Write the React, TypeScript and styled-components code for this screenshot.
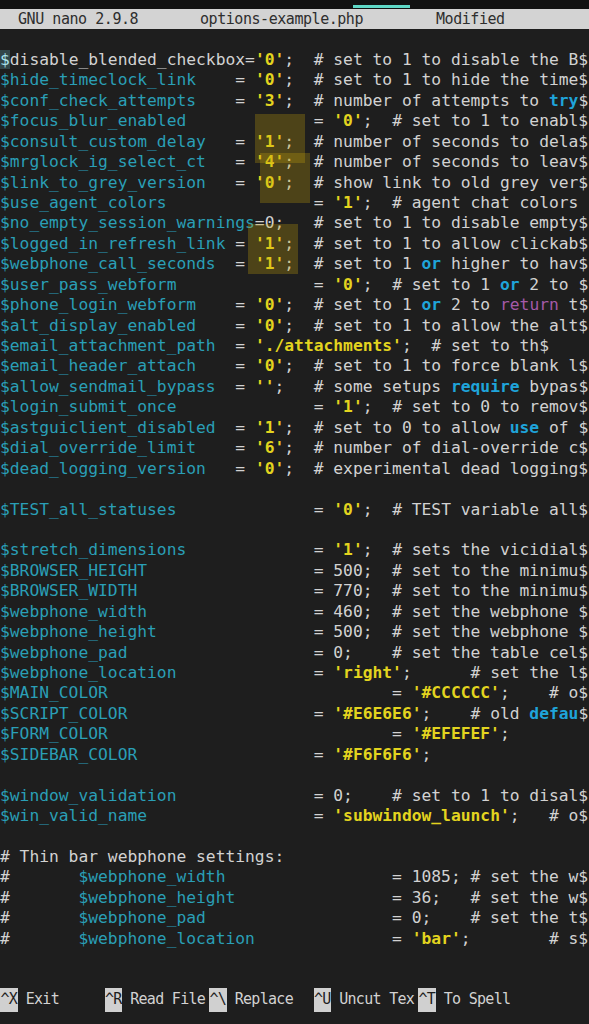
import * as React from 'react';
import styled, { createGlobalStyle } from 'styled-components';

type Kind = 'text' | 'variable' | 'string' | 'keyword' | 'control';

interface Token {
	kind: Kind;
	text: string;
}

var PATTERN = /(\$\w+)|('[^']*')|\b(try|or|require|use|defau)\b|\b(return)\b/g;

function tokenize(line: string): Token[] {
	var tokens: Token[] = [];
	var last = 0;
	for (var m of line.matchAll(PATTERN)) {
		var at = m.index ?? 0;
		if (at > last) tokens.push({ kind: 'text', text: line.slice(last, at) });
		var kind: Kind = m[1] ? 'variable' : m[2] ? 'string' : m[3] ? 'keyword' : 'control';
		tokens.push({ kind, text: m[0] });
		last = at + m[0].length;
	}
	if (last < line.length) tokens.push({ kind: 'text', text: line.slice(last) });
	return tokens;
}

// name padded to the "=" column, then value, then the comment at its column
function setting(name: string, eqCol: number, value: string, commentCol = 0, comment = '') {
	var left = name.padEnd(eqCol) + '= ' + value;
	return comment ? left.padEnd(commentCol) + comment : left;
}

var LINES: string[] = [
	"$disable_blended_checkbox='0';  # set to 1 to disable the B$",
	setting('$hide_timeclock_link', 24, "'0';", 32, '# set to 1 to hide the time$'),
	setting('$conf_check_attempts', 24, "'3';", 32, '# number of attempts to try$'),
	setting('$focus_blur_enabled', 32, "'0';", 40, '# set to 1 to enabl$'),
	setting('$consult_custom_delay', 24, "'1';", 32, '# number of seconds to dela$'),
	setting('$mrglock_ig_select_ct', 24, "'4';", 32, '# number of seconds to leav$'),
	setting('$link_to_grey_version', 24, "'0';", 32, '# show link to old grey ver$'),
	setting('$use_agent_colors', 32, "'1';", 40, '# agent chat colors'),
	'$no_empty_session_warnings=0;   # set to 1 to disable empty$',
	setting('$logged_in_refresh_link', 24, "'1';", 32, '# set to 1 to allow clickab$'),
	setting('$webphone_call_seconds', 24, "'1';", 32, '# set to 1 or higher to hav$'),
	setting('$user_pass_webform', 32, "'0';", 40, '# set to 1 or 2 to $'),
	setting('$phone_login_webform', 24, "'0';", 32, '# set to 1 or 2 to return t$'),
	setting('$alt_display_enabled', 24, "'0';", 32, '# set to 1 to allow the alt$'),
	setting('$email_attachment_path', 24, "'./attachments';", 44, '# set to th$'),
	setting('$email_header_attach', 24, "'0';", 32, '# set to 1 to force blank l$'),
	setting('$allow_sendmail_bypass', 24, "'';", 32, '# some setups require bypas$'),
	setting('$login_submit_once', 32, "'1';", 40, '# set to 0 to remov$'),
	setting('$astguiclient_disabled', 24, "'1';", 32, '# set to 0 to allow use of $'),
	setting('$dial_override_limit', 24, "'6';", 32, '# number of dial-override c$'),
	setting('$dead_logging_version', 24, "'0';", 32, '# experimental dead logging$'),
	'',
	setting('$TEST_all_statuses', 32, "'0';", 40, '# TEST variable all$'),
	'',
	setting('$stretch_dimensions', 32, "'1';", 40, '# sets the vicidial$'),
	setting('$BROWSER_HEIGHT', 32, '500;', 40, '# set to the minimu$'),
	setting('$BROWSER_WIDTH', 32, '770;', 40, '# set to the minimu$'),
	setting('$webphone_width', 32, '460;', 40, '# set the webphone $'),
	setting('$webphone_height', 32, '500;', 40, '# set the webphone $'),
	setting('$webphone_pad', 32, '0;', 40, '# set the table cel$'),
	setting('$webphone_location', 32, "'right';", 48, '# set the l$'),
	setting('$MAIN_COLOR', 40, "'#CCCCCC';", 56, '# o$'),
	setting('$SCRIPT_COLOR', 32, "'#E6E6E6';", 48, '# old defau$'),
	setting('$FORM_COLOR', 40, "'#EFEFEF';"),
	setting('$SIDEBAR_COLOR', 32, "'#F6F6F6';"),
	'',
	setting('$window_validation', 32, '0;', 40, '# set to 1 to disal$'),
	setting('$win_valid_name', 32, "'subwindow_launch';", 56, '# o$'),
	'',
	'# Thin bar webphone settings:',
	setting('#       $webphone_width', 40, '1085;', 48, '# set the w$'),
	setting('#       $webphone_height', 40, '36;', 48, '# set the w$'),
	setting('#       $webphone_pad', 40, '0;', 48, '# set the t$'),
	setting('#       $webphone_location', 40, "'bar';", 56, '# s$'),
];

var SHORTCUTS = [
	{ key: '^X', label: 'Exit' },
	{ key: '^R', label: 'Read File' },
	{ key: '^\\', label: 'Replace' },
	{ key: '^U', label: 'Uncut Tex' },
	{ key: '^T', label: 'To Spell' },
];

// the yellow marks painted over the value column
var MARKS = [
	{ top: 64, left: 255, width: 50, height: 49 },
	{ top: 103, left: 260, width: 50, height: 50 },
	{ top: 174, left: 248, width: 50, height: 50 },
];

function CodeLine({ line, cursor }: { line: string; cursor?: boolean }) {
	var rest = cursor ? line.slice(1) : line;
	return (
		<Row>
			{cursor && <Cursor>{line[0]}</Cursor>}
			{tokenize(rest).map((t, i) => (
				<Tok key={i} $kind={t.kind}>
					{t.text}
				</Tok>
			))}
		</Row>
	);
}

export default function App() {
	return (
		<Screen>
			<GlobalStyle />
			<StatusStrip>
				<Indicator />
			</StatusStrip>
			<TitleBar>
				<span>GNU nano 2.9.8</span>
				<span>options-example.php</span>
				<span>Modified</span>
			</TitleBar>
			<Row />
			<Editor>
				{LINES.map((line, i) => (
					<CodeLine key={i} line={line} cursor={i === 0} />
				))}
				{MARKS.map((m, i) => (
					<Mark key={i} $top={m.top} $left={m.left} $width={m.width} $height={m.height} />
				))}
			</Editor>
			<Spacer />
			<ShortcutBar>
				{SHORTCUTS.map((s) => (
					<Shortcut key={s.key}>
						<Key>{s.key}</Key>
						<Label>{s.label}</Label>
					</Shortcut>
				))}
			</ShortcutBar>
		</Screen>
	);
}

var GlobalStyle = createGlobalStyle`
	html, body {
		margin: 0;
		padding: 0;
		background: #1e1e1e;
	}
	body {
		width: 589px;
		height: 1024px;
		overflow: hidden;
	}
`;

var Screen = styled.div`
	display: flex;
	flex-direction: column;
	width: 589px;
	height: 1024px;
	background: #1e1e1e;
	color: #d2d2d2;
	font-family: 'DejaVu Sans Mono', 'Liberation Mono', monospace;
	font-size: 16.3px;
	line-height: 20.44px;
	overflow: hidden;
`;

var StatusStrip = styled.div`
	display: flex;
	align-items: flex-end;
	height: 9px;
	padding: 0 0 1px 353px;
	box-sizing: border-box;
	background: #121212;
`;

var Indicator = styled.div`
	width: 57px;
	height: 3px;
	background: #5fd8c6;
`;

var TitleBar = styled.div`
	display: grid;
	grid-template-columns: 182px 236px auto;
	height: 20.44px;
	padding-left: 18px;
	background: #d3d3d3;
	color: #2e2e2e;
	font-size: 15px;
	letter-spacing: -0.45px;
	white-space: pre;
`;

var Editor = styled.div`
	position: relative;
	display: flex;
	flex-direction: column;
`;

var Row = styled.div`
	height: 20.44px;
	white-space: pre;
`;

var Cursor = styled.span`
	color: #a9e3ec;
	background: rgba(110, 190, 205, 0.25);
`;

var TOKEN_COLORS: Record<Kind, string> = {
	text: '#d2d2d2',
	variable: '#2a9fb6',
	string: '#e3d41f',
	keyword: '#1fa4da',
	control: '#a45aa9',
};

var Tok = styled.span<{ $kind: Kind }>`
	color: ${(p) => TOKEN_COLORS[p.$kind]};
	font-weight: ${(p) => (p.$kind === 'string' || p.$kind === 'keyword' ? 700 : 400)};
`;

var Mark = styled.div<{ $top: number; $left: number; $width: number; $height: number }>`
	position: absolute;
	top: ${(p) => p.$top}px;
	left: ${(p) => p.$left}px;
	width: ${(p) => p.$width}px;
	height: ${(p) => p.$height}px;
	background: rgba(200, 165, 10, 0.28);
	pointer-events: none;
`;

var Spacer = styled.div`
	height: 38.5px;
	flex-shrink: 0;
`;

var ShortcutBar = styled.div`
	display: flex;
	height: 24px;
	font-size: 15px;
	letter-spacing: -0.7px;
	white-space: pre;
`;

var Shortcut = styled.div`
	display: flex;
	align-items: center;
	width: 104.5px;
	flex-shrink: 0;
	overflow: hidden;
`;

var Key = styled.span`
	display: flex;
	align-items: center;
	height: 24px;
	padding: 0 0.5px;
	background: #d0d0d0;
	color: #1e1e1e;
`;

var Label = styled.span`
	margin-left: 8px;
	color: #d2d2d2;
`;
